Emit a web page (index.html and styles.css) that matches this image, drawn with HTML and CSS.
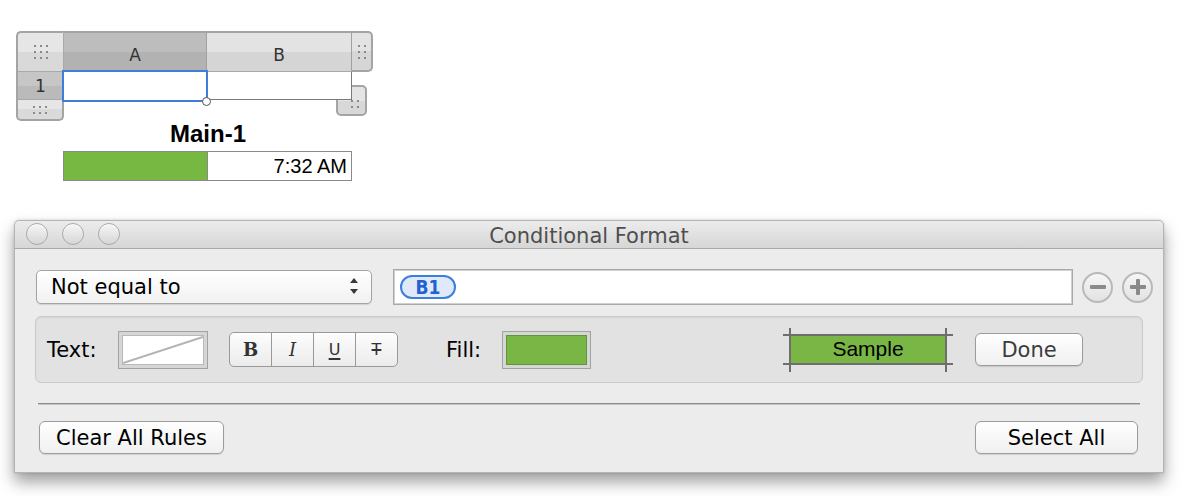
FILE: index.html
```html
<!DOCTYPE html>
<html>
<head>
<meta charset="utf-8">
<link rel="stylesheet" href="styles.css">
</head>
<body>
<div class="page">
  <div class="sheet-area">
    <div class="sheet">
      <div class="corner"><span class="dots d33"></span></div>
      <div class="colhdr sel">A</div>
      <div class="colhdr">B</div>
      <div class="rhandle"><span class="dots d23"></span></div>
      <div class="rowhdr">1</div>
      <div class="cell a1"></div>
      <div class="cell b1"></div>
      <div class="bhandle"><span class="dots d32"></span></div>
      <div class="resize"><span class="dots d22"></span></div>
      <div class="selection"></div>
      <div class="knob"></div>
    </div>
    <div class="caption">Main-1</div>
    <div class="bar"><div class="bar-fill"></div><span class="bar-text">7:32 AM</span></div>
  </div>

  <div class="window">
    <div class="titlebar">
      <div class="lights"><span class="light"></span><span class="light"></span><span class="light"></span></div>
      <div class="title">Conditional Format</div>
    </div>
    <div class="content">
      <div class="row1">
        <div class="popup">
          <span>Not equal to</span>
          <svg class="updown" width="10" height="18" viewBox="0 0 10 18"><path d="M1 5 L5 0 L9 5 Z" fill="#3a3a3a"/><path d="M1 11 L5 16 L9 11 Z" fill="#3a3a3a"/></svg>
        </div>
        <div class="field"><span class="token">B1</span></div>
        <div class="circbtn"><span class="hbar"></span></div>
        <div class="circbtn"><span class="hbar"></span><span class="vbar"></span></div>
      </div>
      <div class="fmtbox">
        <span class="lbl lbl-text">Text:</span>
        <div class="well"><div class="well-inner none">
          <svg width="82" height="30" viewBox="0 0 82 30" preserveAspectRatio="none"><line x1="0" y1="29" x2="82" y2="1" stroke="#b3b3b3" stroke-width="2"/></svg>
        </div></div>
        <div class="seg">
          <span class="segitem b">B</span>
          <span class="segitem i">I</span>
          <span class="segitem u">U</span>
          <span class="segitem s">T</span>
        </div>
        <span class="lbl lbl-fill">Fill:</span>
        <div class="well"><div class="well-inner green"></div></div>
        <div class="sample">
          <div class="sample-box">Sample</div>
          <span class="tick h1"></span><span class="tick h2"></span>
          <span class="tick v1"></span><span class="tick v2"></span>
        </div>
        <div class="btn done">Done</div>
      </div>
      <div class="sep"></div>
      <div class="btnrow">
        <div class="btn clear">Clear All Rules</div>
        <div class="btn selall">Select All</div>
      </div>
    </div>
  </div>
</div>
</body>
</html>
```

FILE: styles.css
```css
* { box-sizing: border-box; }
html, body { margin: 0; padding: 0; background: #ffffff; }
body { width: 1186px; height: 496px; overflow: hidden; font-family: "DejaVu Sans", sans-serif; }

.page { display: flex; flex-direction: column; }

/* ---------- spreadsheet ---------- */
.sheet-area { padding: 31px 0 0 16px; display: flex; flex-direction: column; }
.sheet {
  position: relative;
  display: grid;
  grid-template-columns: 48px 143px 145px 21px;
  grid-template-rows: 41px 28px 21px;
  width: 357px;
}
.corner, .colhdr, .rhandle, .rowhdr, .bhandle {
  display: flex; align-items: center; justify-content: center;
  color: #333; font-size: 16px;
}
.corner {
  background: linear-gradient(#e6e6e6 0 50%, #d9d9d9 50%);
  border-left: 2px solid #a4a4a4; border-top: 2px solid #a4a4a4;
  border-right: 1px solid #a9a9a9; border-bottom: 1px solid #a9a9a9;
  border-top-left-radius: 5px;
}
.colhdr {
  background: linear-gradient(#e3e3e3 0 50%, #d5d5d5 50%);
  border-top: 2px solid #a4a4a4; border-right: 1px solid #a0a0a0; border-bottom: 1px solid #a9a9a9;
  padding-top: 5px; font-size: 17px;
}
.colhdr.sel { background: linear-gradient(#bdbdbd 0 50%, #b2b2b2 50%); }
.rhandle {
  background: linear-gradient(#e3e3e3 0 50%, #d6d6d6 50%);
  border-top: 2px solid #a4a4a4; border-right: 2px solid #a4a4a4; border-bottom: 2px solid #a4a4a4;
  border-top-right-radius: 5px; border-bottom-right-radius: 5px;
}
.rowhdr {
  grid-column: 1; grid-row: 2;
  background: linear-gradient(#c6c6c6 0 50%, #bababa 50%);
  border-left: 2px solid #a4a4a4; border-right: 1px solid #a0a0a0; border-bottom: 1px solid #a9a9a9;
  font-size: 17px;
}
.cell { background: #fff; grid-row: 2; }
.a1 { grid-column: 2; }
.b1 { grid-column: 3; position: relative; z-index: 1; border-right: 1px solid #7a7a7a; border-bottom: 1px solid #7a7a7a; }
.bhandle {
  grid-column: 1; grid-row: 3;
  background: linear-gradient(#e6e6e6 0 50%, #dadada 50%);
  border-left: 2px solid #a4a4a4; border-right: 2px solid #a4a4a4; border-bottom: 2px solid #a4a4a4;
  border-bottom-left-radius: 5px; border-bottom-right-radius: 5px;
}
.dots {
  display: block;
  background-image: radial-gradient(circle, #8a8a8a 0.9px, transparent 1.3px);
  background-size: 6px 6px;
}
.d33 { width: 18px; height: 18px; }
.d23 { width: 12px; height: 18px; }
.d32 { width: 18px; height: 12px; }
.d22 { width: 12px; height: 12px; }

.resize {
  position: absolute; left: 320px; top: 54px; width: 31px; height: 31px;
  background: linear-gradient(#e4e4e4 0 50%, #d8d8d8 50%);
  border: 2px solid #a4a4a4; border-radius: 5px;
  display: flex; align-items: flex-end; justify-content: flex-end; padding: 0 4px 4px 0;
}
.selection {
  position: absolute; left: 46px; top: 39px; width: 146px; height: 32px;
  border: 2px solid #3f7ed6; z-index: 2;
}
.knob {
  position: absolute; left: 186px; top: 66px; width: 9px; height: 9px;
  border-radius: 50%; background: #fff; border: 1px solid #555; z-index: 3;
}
.caption {
  margin: -1px 0 0 48px; width: 288px; height: 28px; line-height: 28px;
  text-align: center; font-family: "Liberation Sans", Arial, sans-serif; font-weight: bold; font-size: 24px; color: #000;
}
.bar {
  margin: 3px 0 0 47px; width: 289px; height: 30px;
  border: 1px solid #8a8a8a; background: #fff;
  display: flex; align-items: center;
}
.bar-fill { width: 144px; height: 100%; background: #77b842; border-right: 1px solid #8a8a8a; }
.bar-text { margin-left: auto; padding-right: 4px; font-family: "Liberation Sans", Arial, sans-serif; font-size: 20px; color: #000; }

/* ---------- window ---------- */
.window {
  margin: 39px 0 0 14px; width: 1150px; height: 253px;
  background: #ececec; border: 1px solid #b4b4b4; border-radius: 5px 5px 0 0;
  box-shadow: 0 9px 16px rgba(0,0,0,0.38), 0 0 3px rgba(0,0,0,0.15);
  display: flex; flex-direction: column;
}
.titlebar {
  position: relative; height: 28px; flex: none;
  background: linear-gradient(#ececec, #d6d6d6);
  border-bottom: 1px solid #a9a9a9; border-radius: 5px 5px 0 0;
  display: flex; align-items: center; justify-content: center;
}
.lights { position: absolute; left: 11px; top: 2px; display: flex; gap: 14px; }
.light {
  width: 22px; height: 22px; border-radius: 50%;
  background: linear-gradient(#f6f6f6, #d6d6d6);
  border: 1px solid #a9a9a9;
  box-shadow: inset 0 1px 1px rgba(255,255,255,0.8);
}
.title { font-size: 21px; color: #4f4f4f; padding-top: 3px; }

.content { padding: 20px 10px 0 20px; display: flex; flex-direction: column; }
.row1 { display: flex; align-items: center; height: 36px; }
.popup {
  margin-left: 1px; width: 336px; height: 34px;
  background: linear-gradient(#ffffff, #f1f1f1);
  border: 1px solid #a3a3a3; border-radius: 5px;
  box-shadow: 0 1px 1px rgba(0,0,0,0.12);
  display: flex; align-items: center; padding: 0 12px 0 14px;
  font-size: 21px; color: #000;
}
.updown { margin-left: auto; }
.field {
  margin-left: 21px; width: 680px; height: 36px;
  background: #fff; border: 1px solid #a9a9a9;
  box-shadow: inset 0 0 0 1px #cfcfcf;
  display: flex; align-items: center; padding-left: 6px;
}
.token {
  width: 56px; height: 24px; border: 2px solid #3b7ee0; border-radius: 12px;
  background: #dfe9f9; color: #1f62d0;
  font-family: "DejaVu Sans Condensed", "DejaVu Sans", sans-serif; font-size: 19px; font-weight: bold;
  display: flex; align-items: center; justify-content: center; padding-bottom: 1px;
}
.circbtn {
  position: relative; margin-left: 9px; width: 31px; height: 31px; border-radius: 50%;
  border: 2px solid #b9b9b9; background: linear-gradient(#f6f6f6, #e2e2e2);
  display: flex; align-items: center; justify-content: center;
}
.hbar { width: 16px; height: 4px; background: #8a8a8a; border-radius: 1px; }
.vbar { position: absolute; width: 4px; height: 16px; background: #8a8a8a; border-radius: 1px; }

.fmtbox {
  margin-top: 11px; width: 1108px; height: 67px;
  background: #e2e2e2; border: 1px solid #cacaca; border-radius: 6px;
  box-shadow: inset 0 1px 2px rgba(0,0,0,0.06);
  display: flex; align-items: center; padding-left: 11px;
}
.lbl { font-size: 21px; color: #000; }
.lbl-text { width: 71px; }
.lbl-fill { width: 56px; margin-left: 48px; }
.well {
  width: 90px; height: 38px; border: 1px solid #a2a2a2; background: #d6d6d6; padding: 3px;
}
.lbl-fill + .well { width: 89px; }
.well-inner { width: 100%; height: 100%; border: 1px solid #b9b9b9; background: #fff; }
.well-inner.none svg { display: block; width: 100%; height: 100%; }
.well-inner.green { background: #79b646; border-color: #5c9934; }
.seg {
  margin-left: 21px; width: 169px; height: 35px;
  border: 1px solid #999; border-radius: 5px;
  background: linear-gradient(#fdfdfd, #ebebeb);
  display: flex;
}
.segitem {
  flex: 1; display: flex; align-items: center; justify-content: center;
  color: #333; font-size: 18px; border-left: 1px solid #999;
}
.segitem:first-child { border-left: none; }
.segitem.b { font-family: "DejaVu Serif", serif; font-weight: bold; }
.segitem.i { font-family: "DejaVu Serif", serif; font-style: italic; }
.segitem.u { font-size: 16px; text-decoration: underline; text-decoration-thickness: 2px; text-underline-offset: 3px; }
.segitem.s { font-size: 16px; text-decoration: line-through; text-decoration-thickness: 2px; }

.sample { position: relative; margin-left: 192px; width: 170px; height: 44px; }
.sample-box {
  position: absolute; left: 7px; top: 7px; width: 156px; height: 29px;
  background: #79b646;
  display: flex; align-items: center; justify-content: center;
  font-family: "Liberation Sans", Arial, sans-serif; font-size: 21px; color: #000;
}
.tick { position: absolute; background: #6e6e6e; }
.tick.h1 { left: 0; top: 6px; width: 170px; height: 2px; }
.tick.h2 { left: 0; top: 35px; width: 170px; height: 2px; }
.tick.v1 { left: 6px; top: 0; width: 2px; height: 44px; }
.tick.v2 { left: 162px; top: 0; width: 2px; height: 44px; }

.btn {
  height: 33px; border: 1px solid #9c9c9c; border-radius: 6px;
  background: linear-gradient(#ffffff, #f0f0f0);
  box-shadow: 0 1px 1px rgba(0,0,0,0.12);
  display: flex; align-items: center; justify-content: center;
  font-size: 21px; color: #000;
}
.done { margin-left: 22px; width: 108px; color: #3c3c3c; }
.sep { margin: 20px 0 0 3px; width: 1102px; height: 2px; border-top: 1px solid #8c8c8c; border-bottom: 1px solid #c4c4c4; }
.btnrow { margin-top: 16px; display: flex; padding: 0 15px 0 4px; }
.clear { width: 185px; }
.selall { margin-left: auto; width: 163px; }
```
